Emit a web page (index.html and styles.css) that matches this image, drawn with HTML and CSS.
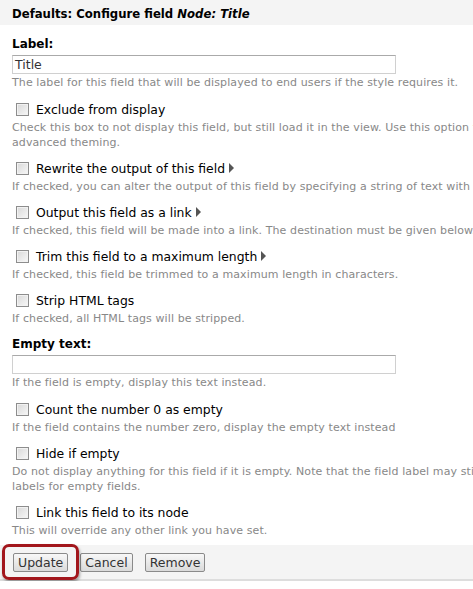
FILE: index.html
```html
<!DOCTYPE html>
<html>
<head>
<meta charset="utf-8">
<link rel="stylesheet" href="styles.css">
</head>
<body>
<div class="header">Defaults: Configure field <em>Node: Title</em></div>
<div class="content">
  <div class="field">
    <div class="label">Label:</div>
    <div class="input">Title</div>
    <div class="desc">The label for this field that will be displayed to end users if the style requires it.</div>
  </div>
  <div class="check">
    <div class="row"><span class="box"></span><span class="text">Exclude from display</span></div>
    <div class="desc">Check this box to not display this field, but still load it in the view. Use this option to not show a field</div>
    <div class="desc">advanced theming.</div>
  </div>
  <div class="check">
    <div class="row"><span class="box"></span><span class="text">Rewrite the output of this field</span><span class="tri"></span></div>
    <div class="desc">If checked, you can alter the output of this field by specifying a string of text with replacement tokens</div>
  </div>
  <div class="check">
    <div class="row"><span class="box"></span><span class="text">Output this field as a link</span><span class="tri"></span></div>
    <div class="desc">If checked, this field will be made into a link. The destination must be given below.</div>
  </div>
  <div class="check">
    <div class="row"><span class="box"></span><span class="text">Trim this field to a maximum length</span><span class="tri"></span></div>
    <div class="desc">If checked, this field be trimmed to a maximum length in characters.</div>
  </div>
  <div class="check">
    <div class="row"><span class="box"></span><span class="text">Strip HTML tags</span></div>
    <div class="desc">If checked, all HTML tags will be stripped.</div>
  </div>
  <div class="field">
    <div class="label">Empty text:</div>
    <div class="input"></div>
    <div class="desc">If the field is empty, display this text instead.</div>
  </div>
  <div class="check">
    <div class="row"><span class="box"></span><span class="text">Count the number 0 as empty</span></div>
    <div class="desc">If the field contains the number zero, display the empty text instead</div>
  </div>
  <div class="check">
    <div class="row"><span class="box"></span><span class="text">Hide if empty</span></div>
    <div class="desc">Do not display anything for this field if it is empty. Note that the field label may still be displayed. Check style or row style settings to hide</div>
    <div class="desc">labels for empty fields.</div>
  </div>
  <div class="check">
    <div class="row"><span class="box"></span><span class="text">Link this field to its node</span></div>
    <div class="desc">This will override any other link you have set.</div>
  </div>
</div>
<div class="footer">
  <span class="highlight"><span class="btn">Update</span></span>
  <span class="btn">Cancel</span>
  <span class="btn">Remove</span>
</div>
</body>
</html>
```
FILE: styles.css
```css
html, body { margin: 0; padding: 0; background: #fff; overflow: hidden; }
body { font-family: "DejaVu Sans", Verdana, sans-serif; color: #000; width: 473px; }
.header {
  background: #f4f4f4;
  height: 25px;
  line-height: 29px;
  padding-left: 12px;
  font-size: 11.7px;
  font-weight: bold;
  white-space: nowrap;
}
.content { padding: 9px 0 0 12px; white-space: nowrap; }
.label { font-size: 12px; font-weight: bold; height: 20px; line-height: 20px; }
.input {
  width: 378px;
  height: 17px;
  margin-top: 1px;
  border: 1px solid #d0d0d0;
  border-top-color: #aaa;
  font-size: 12.5px;
  line-height: 17px;
  padding: 0 2px;
  color: #333;
  box-sizing: content-box;
}
.desc { font-size: 11px; color: #888; height: 15px; line-height: 15px; letter-spacing: 0.1px; }
.field .desc { margin-top: 1px; }
.row + .desc { margin-top: 1px; }
.field { margin-bottom: 9px; }
.check { margin-bottom: 8px; }
.check:last-child { margin-bottom: 7px; }
.row { height: 20px; display: flex; align-items: center; }
.box {
  width: 11px; height: 11px;
  border: 1px solid #8d8d8d;
  background: linear-gradient(135deg, #d8d8d8, #f8f8f8);
  margin-left: 4px; margin-right: 7px;
  box-shadow: inset 0 0 0 1px #f2f2f2;
}
.text { font-size: 12.4px; }
.tri {
  width: 0; height: 0;
  border-top: 5px solid transparent;
  border-bottom: 5px solid transparent;
  border-left: 5px solid #555;
  margin-left: 4px;
}
.footer {
  background: #f4f4f4;
  height: 34px;
  border-bottom: 2px solid #ddd;
  display: flex;
  align-items: center;
  padding-left: 13px;
}
.btn {
  display: inline-block;
  font-size: 12.5px;
  border: 1px solid #8a8a8a;
  border-radius: 2px;
  background: linear-gradient(#f8f8f8, #dadada);
  padding: 0 4px;
  height: 17px;
  line-height: 17px;
  color: #333;
  margin-right: 12px;
}
.highlight { position: relative; display: inline-block; margin-right: 12px; }
.highlight .btn { margin-right: 0; display: block; }
.highlight::before {
  content: "";
  position: absolute;
  left: -11px; top: -9px; right: -11px; bottom: -8px;
  border: 3px solid #a2161c;
  border-radius: 7px;
  box-shadow: 1px 2px 3px rgba(0,0,0,0.35);
}
```
